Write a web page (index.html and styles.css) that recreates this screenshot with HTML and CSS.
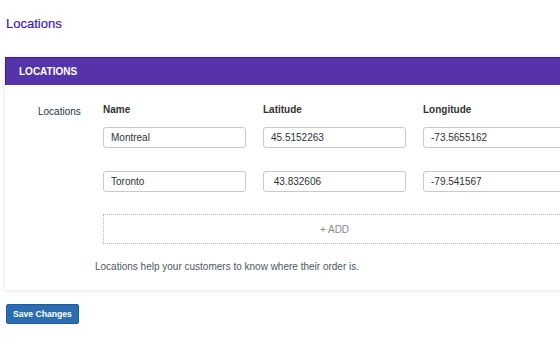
FILE: index.html
```html
<!DOCTYPE html>
<html lang="en">
<head>
    <meta charset="UTF-8">
    <meta name="viewport" content="width=device-width, initial-scale=1.0">
    <title>Locations</title>
    <link rel="stylesheet" href="styles.css">
</head>
<body>
    <div class="wrap">
        <h1 class="page-title">Locations</h1>

        <!-- Locations panel -->
        <div class="panel">
            <div class="panel-head">LOCATIONS</div>
            <div class="panel-body">
                <div class="field-row">
                    <div class="field-label">Locations</div>
                    <div class="field-main">
                        <div class="loc-grid">
                            <div class="col-head">Name</div>
                            <div class="col-head">Latitude</div>
                            <div class="col-head">Longitude</div>

                            <input type="text" value="Montreal">
                            <input type="text" value="45.5152263">
                            <input type="text" value="-73.5655162">

                            <input type="text" value="Toronto">
                            <input type="text" value=" 43.832606">
                            <input type="text" value="-79.541567">
                        </div>
                        <button class="add-btn" type="button">+ ADD</button>
                    </div>
                </div>
                <p class="help">Locations help your customers to know where their order is.</p>
            </div>
        </div>

        <button class="save-btn" type="button">Save Changes</button>
    </div>
</body>
</html>
```

FILE: styles.css
```css
html, body {
    overflow: hidden;
}
body {
    margin: 0;
    font-family: "Liberation Sans", Arial, sans-serif;
    color: #2c3338;
    background: #fff;
}
.wrap {
    width: 640px;
    padding: 0 0 0 5px;
}
.page-title {
    margin: 0;
    padding: 16px 0 0 1px;
    font-size: 13px;
    line-height: 16px;
    font-weight: normal;
    color: #3d18c2;
    -webkit-text-stroke: 0.2px #3d18c2;
}
.panel {
    margin-top: 25px;
    background: #fff;
    box-shadow: 0 1px 5px rgba(0, 0, 0, 0.12);
}
.panel-head {
    height: 27px;
    line-height: 27px;
    padding-left: 13px;
    background: #5633aa;
    border-top: 1px solid #3e1c96;
    border-left: 1px solid #3e1c96;
    color: #fff;
    font-size: 10px;
    font-weight: bold;
}
.panel-body {
    padding: 19px 0 17px 33px;
}
.field-row {
    display: flex;
}
.field-label {
    width: 65px;
    padding-top: 2px;
    font-size: 10px;
    line-height: 12px;
    color: #2c3338;
}
.field-main {
    width: 463px;
}
.loc-grid {
    display: grid;
    grid-template-columns: 143px 143px 143px;
    column-gap: 17px;
    row-gap: 23px;
}
.col-head {
    font-size: 10px;
    line-height: 12px;
    font-weight: bold;
    color: #333;
    margin-bottom: -12px;
}
.loc-grid input {
    box-sizing: border-box;
    height: 21px;
    width: 143px;
    margin: 0;
    padding: 0 7px;
    border: 1.5px solid #c9c9c9;
    border-radius: 3px;
    font-family: inherit;
    font-size: 10px;
    color: #2c3338;
}
.add-btn {
    display: block;
    box-sizing: border-box;
    width: 100%;
    height: 30px;
    margin-top: 22px;
    padding: 0;
    border: 1px dotted #b8b8b8;
    background: #fff;
    font-family: inherit;
    font-size: 10px;
    color: #8a8a8a;
}
.help {
    margin: 17px 0 0 57px;
    font-size: 10px;
    line-height: 12px;
    color: #50575e;
}
.save-btn {
    margin: 14px 0 0 1px;
    height: 20px;
    padding: 0 6px;
    background: #2b6db0;
    border: 1px solid #1f5c9c;
    border-radius: 2px;
    color: #fff;
    font-family: inherit;
    font-size: 8.6px;
    font-weight: bold;
}
```
